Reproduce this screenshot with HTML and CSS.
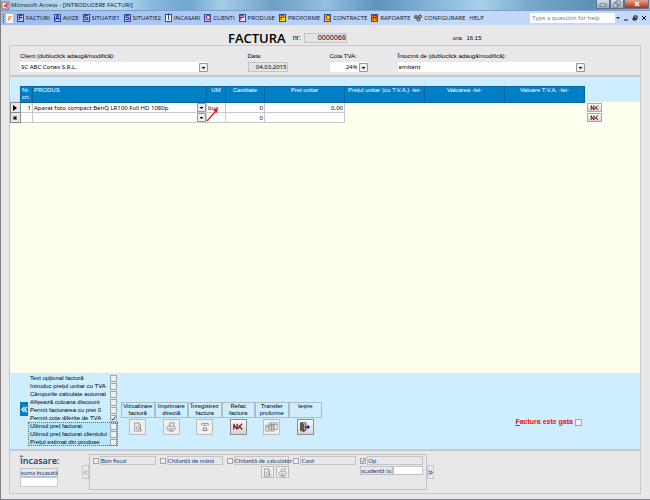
FILE: index.html
```html
<!DOCTYPE html>
<html lang="ro">
<head>
    <meta charset="UTF-8">
    <meta name="viewport" content="width=device-width, initial-scale=1.0">
    <title>Microsoft Access - [INTRODUCERE FACTURI]</title>
    <link rel="stylesheet" href="styles.css">
</head>
<body>
    <!-- Shared icons -->
    <svg class="defs" width="0" height="0">
        <symbol id="preview" viewBox="0 0 12 12"><path d="M2 1h5l2 2v8H2zM7 1v2h2M4 7a2 2 0 1 0 4 0a2 2 0 1 0-4 0M8 8l3 3" fill="none" stroke="#909090"/></symbol>
        <symbol id="print" viewBox="0 0 12 12"><path d="M4 5l1-4h5l-1 4M1 6l2-1h7l1 1v3l-2 1H2L1 9zM3 8h6M4 11h5" fill="none" stroke="#909090"/></symbol>
        <symbol id="save" viewBox="0 0 12 12"><path d="M2 4V2h8v2M4 4h4M3 10h6M4 7h4v3H4z" fill="none" stroke="#909090" stroke-width="1.2"/></symbol>
        <symbol id="undo" viewBox="0 0 12 12"><path d="M1 2v7M1 3l4 6M5 2v6M6 8l5-6M7 4l4 5" fill="none" stroke="#8c0a18" stroke-width="1.5"/></symbol>
        <symbol id="transfer" viewBox="0 0 16 12"><path d="M5 1h10v8H5zM5 3h10M8 1v8M11 1v8M1 4h10v7H1zM1 6h10M4 4v7M8 4v7" fill="#eee" stroke="#888" stroke-width=".8"/></symbol>
        <symbol id="exit" viewBox="0 0 12 12"><path d="M1 1h6v9H1z" fill="#fff" stroke="#222"/><path d="M1 1l4 2v9l-4-2z" fill="#6b6430" stroke="#222" stroke-width=".6"/><path d="M6 6h5M9 4l2 2l-2 2" fill="none" stroke="#00148c" stroke-width="1.5"/></symbol>
    </svg>

    <div class="titlebar">
        <svg class="app-icon" viewBox="0 0 9 9"><path d="M1 1h7v7H1z" fill="#f0e4e8" stroke="#a05868"/><path d="M3 6l3-4v5M3 5h3" stroke="#b02848" fill="none"/></svg>
        <span>Microsoft Access - [INTRODUCERE FACTURI]</span>
        <div class="window-buttons">
            <button aria-label="Minimize"><svg viewBox="0 0 10 8"><path d="M2 4h6v2H2z" fill="#fff" stroke="#555" stroke-width=".7"/></svg></button>
            <button aria-label="Restore"><svg viewBox="0 0 10 8"><path d="M4 1h4v4H4zM2 3h4v4H2z" fill="#eee" stroke="#555" stroke-width=".7"/></svg></button>
            <button class="close" aria-label="Close"><svg viewBox="0 0 10 8"><path d="M3 2l4 4M7 2l-4 4" stroke="#fff" stroke-width="1.6"/></svg></button>
        </div>
    </div>

    <div class="menubar">
        <nav>
            <a href="#" class="logo">F</a>
            <a href="#"><i>F</i>FACTURI</a>
            <a href="#"><i>A</i>AVIZE</a>
            <a href="#"><i>S</i>SITUATIE1</a>
            <a href="#"><i>S</i>SITUATIE2</a>
            <a href="#"><i class="white">Î</i>INCASARI</a>
            <a href="#"><i class="purple">C</i>CLIENTI</a>
            <a href="#"><i class="violet">P</i>PRODUSE</a>
            <a href="#"><i class="yellow">P</i>PROFORME</a>
            <a href="#"><i class="yellow">C</i>CONTRACTE</a>
            <a href="#"><i class="orange">R</i>RAPOARTE</a>
            <a href="#"><svg viewBox="0 0 8 8"><circle cx="2" cy="3" r="1.5"/><circle cx="6" cy="2.5" r="1.5"/><circle cx="4.5" cy="5.5" r="1.5"/></svg>CONFIGURARE</a>
            <a href="#">HELP</a>
        </nav>
        <div class="help">
            <input type="text" placeholder="Type a question for help" aria-label="Type a question for help">
            <button class="drop" aria-label="Help list"><svg viewBox="0 0 6 6"><path d="M1 2h4l-2 2z" fill="#223"/></svg></button>
            <button aria-label="Minimize form"><svg viewBox="0 0 6 6"><path d="M1 5h4" stroke="#111"/></svg></button>
            <button aria-label="Restore form"><svg viewBox="0 0 6 6"><path d="M2 1h3v3H2zM1 3h3v2H1z" fill="#fff" stroke="#111"/></svg></button>
            <button aria-label="Close form"><svg viewBox="0 0 6 6"><path d="M1 1l4 4M5 1l-4 4" stroke="#111"/></svg></button>
        </div>
    </div>

    <main>
        <div class="heading">
            <h1>FACTURA</h1>
            <label for="nr">nr:</label>
            <input type="text" id="nr" value="0000068" readonly>
            <span class="hour">ora:&nbsp; 16:15</span>
        </div>

        <div class="client">
            <div class="field wide">
                <label for="client">Client (dubluclick adaugă/modifică):</label>
                <select id="client"><option>SC ABC Conex S.R.L.</option></select>
            </div>
            <div class="field data">
                <label for="data">Data:</label>
                <input type="text" id="data" value="04.03.2015" readonly>
            </div>
            <div class="field tva">
                <label for="tva">Cota TVA:</label>
                <select id="tva"><option>24%</option></select>
            </div>
            <div class="field wide">
                <label for="emitent">Întocmit de (dubluclick adaugă/modifică):</label>
                <select id="emitent"><option>emitent</option></select>
            </div>
        </div>

        <div class="items">
            <table>
                <colgroup>
                    <col class="c-mark"><col class="c-nr"><col class="c-produs"><col class="c-um"><col class="c-cant">
                    <col class="c-price"><col class="c-price"><col class="c-price"><col class="c-price"><col>
                </colgroup>
                <thead>
                    <tr>
                        <td></td>
                        <th class="left">Nr. crt.</th>
                        <th class="left">PRODUS</th>
                        <th>UM</th>
                        <th>Cantitate</th>
                        <th>Pret unitar</th>
                        <th>Prețul unitar (cu T.V.A.) -lei-</th>
                        <th>Valoarea -lei-</th>
                        <th>Valoare T.V.A. -lei-</th>
                        <td></td>
                    </tr>
                </thead>
                <tbody>
                    <tr>
                        <td class="mark"><svg viewBox="0 0 8 8"><path d="M2 1l4 3l-4 3z"/></svg></td>
                        <td class="cell num">1</td>
                        <td class="cell"><select aria-label="Produs"><option>Aparat foto compact BenQ LR100 Full HD 1080p</option></select></td>
                        <td class="cell um">buc<svg class="arrow" viewBox="0 0 16 20"><path d="M2 18L11 8" stroke="#e8141c" stroke-width="1.2"/><path d="M13 5l-1 5l-4-3z" fill="#e8141c"/></svg></td>
                        <td class="cell num">0</td>
                        <td class="cell num">0,00</td>
                        <td></td><td></td><td></td>
                        <td><button class="delete" aria-label="Șterge"><svg><use href="#undo"/></svg></button></td>
                    </tr>
                    <tr>
                        <td class="mark"><svg viewBox="0 0 8 8"><path d="M4 2v4M2 4h4M2.500 2.500l3 3M5.500 2.500l-3 3" stroke="#111"/></svg></td>
                        <td class="cell"></td>
                        <td class="cell"><select aria-label="Produs nou"><option></option></select></td>
                        <td class="cell"></td>
                        <td class="cell num">0</td>
                        <td class="cell"></td>
                        <td></td><td></td><td></td>
                        <td><button class="delete" aria-label="Șterge"><svg><use href="#undo"/></svg></button></td>
                    </tr>
                </tbody>
            </table>
        </div>

        <div class="actions">
            <button class="collapse" aria-label="Ascunde opțiuni"><svg viewBox="0 0 8 8"><path d="M4 1L1 4l3 3M7 1L4 4l3 3"/></svg></button>
            <div class="options">
                <label>Text opțional factură<input type="checkbox"></label>
                <label>Introduc prețul unitar cu TVA<input type="checkbox"></label>
                <label>Câmpurile calculate automat<input type="checkbox"></label>
                <label>Afișează coloana discount<input type="checkbox"></label>
                <label>Permit facturarea cu pret 0<input type="checkbox"></label>
                <label>Permit cote diferite de TVA<input type="checkbox" checked></label>
                <div class="last-price">
                    <label>Ultimul preț facturat<input type="checkbox"></label>
                    <label>Ultimul preț facturat clientului<input type="checkbox"></label>
                    <label>Prețul estimat din produse<input type="checkbox"></label>
                </div>
            </div>
            <div class="tools">
                <div><span id="t1">Vizualizare factură</span><button aria-labelledby="t1" disabled><svg><use href="#preview"/></svg></button></div>
                <div><span id="t2">Imprimare directă</span><button aria-labelledby="t2" disabled><svg><use href="#print"/></svg></button></div>
                <div><span id="t3">Înregistrez factura</span><button aria-labelledby="t3" disabled><svg><use href="#save"/></svg></button></div>
                <div><span id="t4">Refac<br>factura</span><button aria-labelledby="t4"><svg><use href="#undo"/></svg></button></div>
                <div><span id="t5">Transfer proforme</span><button aria-labelledby="t5" disabled><svg class="big"><use href="#transfer"/></svg></button></div>
                <div><span id="t6">Ieșire</span><button aria-labelledby="t6"><svg><use href="#exit"/></svg></button></div>
            </div>
            <label class="ready"><span><u>F</u>actura este gata</span><input type="checkbox"></label>
        </div>

        <div class="payment">
            <div class="sum">
                <h2>Încasare:</h2>
                <label for="suma">suma încasată</label>
                <input type="text" id="suma">
            </div>
            <button class="prev" aria-label="Înapoi"><svg viewBox="0 0 8 8"><path d="M4 1L1 4l3 3M7 1L4 4l3 3"/></svg></button>
            <div class="methods">
                <div class="method"><input type="checkbox" id="m1"><label for="m1">Bon fiscal</label></div>
                <div class="method"><input type="checkbox" id="m2"><label for="m2">Chitanță de mână</label></div>
                <div class="method">
                    <input type="checkbox" id="m3"><label for="m3">Chitanță de calculator</label>
                    <div class="receipt">
                        <button aria-label="Vizualizare chitanță" disabled><svg><use href="#preview"/></svg></button>
                        <button aria-label="Imprimare chitanță" disabled><svg><use href="#print"/></svg></button>
                    </div>
                </div>
                <div class="method"><input type="checkbox" id="m4"><label for="m4">Card</label></div>
                <div class="method">
                    <input type="checkbox" id="m5" checked><label for="m5">Op</label>
                    <div class="due"><label for="scadenta">scadentă la:</label><input type="text" id="scadenta"></div>
                </div>
            </div>
            <button class="next" aria-label="Înainte"><svg viewBox="0 0 8 8"><path d="M1 1l3 3l-3 3M4 1l3 3l-3 3"/></svg></button>
        </div>
    </main>
</body>
</html>
```
FILE: styles.css
```css
* {
    box-sizing: border-box;
}

body {
    display: flex;
    flex-direction: column;
    min-height: 100vh;
    margin: 0;
    background: #e8e8e8;
    border-left: 1px solid #808080;
    border-bottom: 1px solid #7a828c;
    color: #000;
    font-family: "Liberation Sans", Arial, sans-serif;
    font-size: 6px;
    line-height: 8px;
}

button, input, select {
    margin: 0;
    padding: 0;
    border: none;
    border-radius: 0;
    font: inherit;
    color: inherit;
}

button {
    display: flex;
    flex: none;
    align-items: center;
    justify-content: center;
    background: none;
}

a {
    color: inherit;
    text-decoration: none;
}

h1, h2 {
    margin: 0;
}

.defs {
    position: absolute;
}

/* Title bar */
.titlebar {
    display: flex;
    align-items: center;
    height: 10px;
    background: linear-gradient(90deg, #a9cdea 0%, #b8dcf2 18%, #83b6da 24%, #6fa8d0 29%, #a5cde8 34%, #6f9fc4 42%, #93bfe0 50%, #5e93bd 58%, #83b4d8 66%, #a7cfec 74%, #76a6ca 82%, #5f8fb4 91%, #a0c4de 100%);
    font-family: "Open Sans", sans-serif;
    color: #08141c;
}

.app-icon {
    width: 9px;
    height: 9px;
    margin-right: 1px;
}

.window-buttons {
    display: flex;
    align-self: flex-start;
    margin-left: auto;
    margin-right: 1px;
}

.window-buttons button {
    width: 14px;
    height: 9px;
    border: 1px solid #5b7389;
    border-top: none;
    background: linear-gradient(#d3e1ec, #8fa9bf);
}

.window-buttons .close {
    width: 25px;
    background: linear-gradient(#e3a292, #b72d18);
}

.window-buttons svg {
    width: 10px;
    height: 8px;
}

/* Menu */
.menubar {
    display: flex;
    align-items: center;
    justify-content: space-between;
    height: 15px;
    padding: 0 2px;
    border-top: 1px solid #7f9fc6;
    background: linear-gradient(90deg, #9dbcf0, #c4d9fa 70%);
    font-family: "Open Sans", sans-serif;
    color: #08101c;
}

.menubar nav {
    display: flex;
    align-items: center;
    gap: 4px;
    padding-left: 2px;
    border-left: 1px dotted #34508c;
}

.menubar nav a {
    display: flex;
    align-items: center;
    gap: 2px;
}

.menubar nav .logo {
    justify-content: center;
    width: 7px;
    height: 9px;
    background: #fff;
    color: #e02818;
    font-size: 8px;
    font-style: italic;
}

.menubar i {
    width: 7px;
    height: 8px;
    border: 1px solid #334a86;
    background: #c3ccf0;
    color: #0c10d8;
    font: bold 7px/6px "Liberation Sans", Arial, sans-serif;
    text-align: center;
}

.menubar i.white {
    background: #fff;
}

.menubar i.purple {
    background: #e5c8e8;
    color: #8a1480;
}

.menubar i.violet {
    background: #f3e3f7;
    color: #741c94;
}

.menubar i.yellow {
    background: #ffe000;
    color: #d81010;
}

.menubar i.orange {
    background: #ff9c10;
    color: #c80808;
}

.menubar nav svg {
    width: 8px;
    height: 8px;
    fill: #aaa;
    stroke: #444;
}

.help {
    display: flex;
    align-items: center;
}

.help input {
    width: 85px;
    height: 10px;
    padding: 0 2px;
    background: #fff;
}

.help input::placeholder {
    color: #777;
}

.help button {
    width: 9px;
    height: 10px;
}

.help .drop {
    width: 6px;
}

.help svg {
    width: 6px;
    height: 6px;
}

/* Form */
main {
    display: flex;
    flex: 1;
    flex-direction: column;
    padding: 0 9px 5px 8px;
}

.heading {
    display: flex;
    align-items: center;
    height: 20px;
    padding: 5px 0 0 219px;
    font-size: 7px;
}

.heading h1 {
    color: #000;
    font: 600 13px/16px "Open Sans", sans-serif;
}

.heading label {
    margin: 0 3px 0 7px;
}

.heading input {
    width: 43px;
    height: 10px;
    text-align: right;
}

input[readonly] {
    border: 1px solid #c4c4c4;
    background: #e4e4e4;
}

.hour {
    margin-left: 106px;
    font-size: 6px;
}

.client {
    display: flex;
    height: 30px;
    padding: 6px 55px 0 10px;
    border: 1px solid #c8c8c8;
    border-bottom: none;
}

.field {
    display: flex;
    flex-direction: column;
    gap: 2px;
}

.field.wide {
    flex: 1;
}

.field.data {
    width: 40px;
    margin-left: 40px;
}

.field.tva {
    width: 38px;
    margin: 0 30px 0 42px;
}

.field input,
select {
    width: 100%;
    height: 10px;
}

.field input,
.heading input,
.field select,
.cell {
    font-family: "Noto Sans", sans-serif;
    color: #000010;
}

.field.data input,
.tva select {
    text-align: right;
}

select {
    appearance: none;
    padding: 0 10px 0 1px;
    background: #fff url("data:image/svg+xml,%3Csvg xmlns='http://www.w3.org/2000/svg' width='9' height='9'%3E%3Cpath d='M.5.5h8v8h-8z' fill='%23eee' stroke='%23999'/%3E%3Cpath d='M2.5 4h4L4.5 6z'/%3E%3C/svg%3E") no-repeat right center;
}

/* Invoice lines */
.items {
    flex: 1;
    padding-top: 9px;
    border: 1px solid #c8c8c8;
    border-width: 2px 1px 0;
    background: linear-gradient(#ceeeff 25px, #ffffee 25px);
}

table {
    width: 100%;
    table-layout: fixed;
    border-collapse: collapse;
}

.c-mark { width: 10px; }
.c-nr { width: 12px; }
.c-produs { width: 174px; }
.c-um { width: 19px; }
.c-cant { width: 39px; }
.c-price { width: 80px; }

td, th {
    padding: 0;
}

th {
    height: 16px;
    padding: 0 1px;
    border: 1px solid #0a62a4;
    background: #0080c4;
    color: #fff;
    font-weight: normal;
    line-height: 7px;
    vertical-align: top;
}

th.left {
    text-align: left;
}

tbody tr {
    height: 9px;
}

.cell {
    border: 1px solid #c8c8c8;
    background: #fff;
    line-height: 8px;
}

.cell select {
    display: block;
    height: 9px;
}

.num {
    padding-right: 1px;
    text-align: right;
}

.um {
    position: relative;
    padding-left: 1px;
}

.arrow {
    position: absolute;
    left: -2px;
    top: 0;
    width: 16px;
    height: 20px;
}

.mark {
    border: 1px solid #888;
    background: #e8e8e8;
}

.mark svg {
    display: block;
    width: 8px;
    height: 8px;
}

.delete {
    width: 15px;
    height: 9px;
    margin-left: 2px;
    border: 1px solid #aaa;
    background: linear-gradient(#fff, #d4d4d4);
}

.delete svg {
    width: 9px;
    height: 8px;
}

/* Options and tools */
.actions {
    display: flex;
    height: 76px;
    padding-left: 10px;
    border: 1px solid #c8c8c8;
    border-width: 0 1px;
    background: #ceeeff;
}

.collapse {
    width: 8px;
    height: 14px;
    margin-top: 29px;
    background: #0080c4;
}

.collapse svg,
.prev svg,
.next svg {
    width: 7px;
    height: 7px;
    fill: none;
    stroke: #fff;
    stroke-width: 1.4;
}

.options {
    width: 90px;
    padding-top: 1px;
}

.options label {
    display: flex;
    align-items: center;
    justify-content: space-between;
    height: 8px;
    padding: 0 1px 0 2px;
    white-space: nowrap;
}

.options .last-price {
    outline: 1px dotted #668;
    outline-offset: -1px;
    background: #b8e8ff;
}

input[type="checkbox"] {
    appearance: none;
    flex: none;
    width: 7px;
    height: 7px;
    border: 1px solid #a4a4a4;
    background: #f0f0f0;
}

input[type="checkbox"]:checked {
    background: #f0f0f0 url("data:image/svg+xml,%3Csvg xmlns='http://www.w3.org/2000/svg' viewBox='0 0 5 5'%3E%3Cpath d='M.5 2.5L2 4L4.5.5' fill='none' stroke='%23223c88'/%3E%3C/svg%3E");
}

.tools {
    display: grid;
    grid-template-columns: repeat(6, 1fr);
    width: 201px;
    margin: 29px 0 0 3px;
}

.tools div {
    display: flex;
    flex-direction: column;
    align-items: center;
    gap: 1px;
    text-align: center;
}

.tools span {
    width: 100%;
    height: 16px;
    border: 1px solid #b0bcc4;
    line-height: 7px;
}

.tools button {
    width: 17px;
    height: 16px;
    border: 1px solid #8c8c8c;
    background: linear-gradient(#fafafa, #d4d4d4);
}

.tools button:disabled,
.receipt button {
    border-color: #bbb;
    background: #f0f0f0;
}

.tools svg {
    width: 10px;
    height: 10px;
}

.tools svg.big {
    width: 15px;
}

.ready {
    display: flex;
    align-items: center;
    gap: 2px;
    height: 8px;
    margin: 45px 58px 0 auto;
    color: #f01010;
    font-size: 7px;
    font-weight: bold;
}

/* Payment */
.payment {
    display: flex;
    height: 45px;
    padding: 3px 10px;
    border: 1px solid #c8c8c8;
    border-top-width: 2px;
    color: #103c80;
}

.sum {
    width: 38px;
}

.sum h2 {
    color: #0c3c7c;
    font: 600 9px/14px "Open Sans", sans-serif;
}

.sum label,
.due label {
    display: block;
    height: 9px;
    border: 1px solid #c0c0c0;
    line-height: 7px;
    white-space: nowrap;
}

.sum label,
.method label {
    font-family: Lato, sans-serif;
}

.sum input {
    display: block;
    width: 100%;
    height: 10px;
    border: 1px solid #c8c8c8;
}

.prev,
.next {
    width: 7px;
    height: 14px;
    margin-top: 11px;
    border: 1px solid #c8c8c8;
}

.prev {
    margin-left: 24px;
}

.prev svg {
    stroke: #999;
}

.next svg {
    stroke: #0c3c7c;
}

.methods {
    display: grid;
    grid-template-columns: repeat(5, minmax(0, 1fr));
    column-gap: 4px;
    width: 338px;
    height: 36px;
    padding: 1px 3px;
    border: 1px solid #c0c0c0;
}

.method {
    display: flex;
    flex-wrap: wrap;
    align-content: flex-start;
    align-items: center;
    gap: 1px;
}

.method > input[type="checkbox"] {
    width: 6px;
    height: 6px;
}

.method > label {
    flex: 1;
    min-width: 0;
    height: 9px;
    border: 1px solid #c4c4c4;
    line-height: 7px;
    white-space: nowrap;
}

.receipt {
    display: flex;
    justify-content: flex-end;
    gap: 2px;
    width: 100%;
}

.receipt button {
    width: 13px;
    height: 12px;
    border: 1px solid #bbb;
}

.receipt svg {
    width: 9px;
    height: 9px;
}

.due {
    display: flex;
    width: 100%;
}

.due input {
    flex: 1;
    width: 0;
    height: 9px;
    border: 1px solid #c4c4c4;
}
```
